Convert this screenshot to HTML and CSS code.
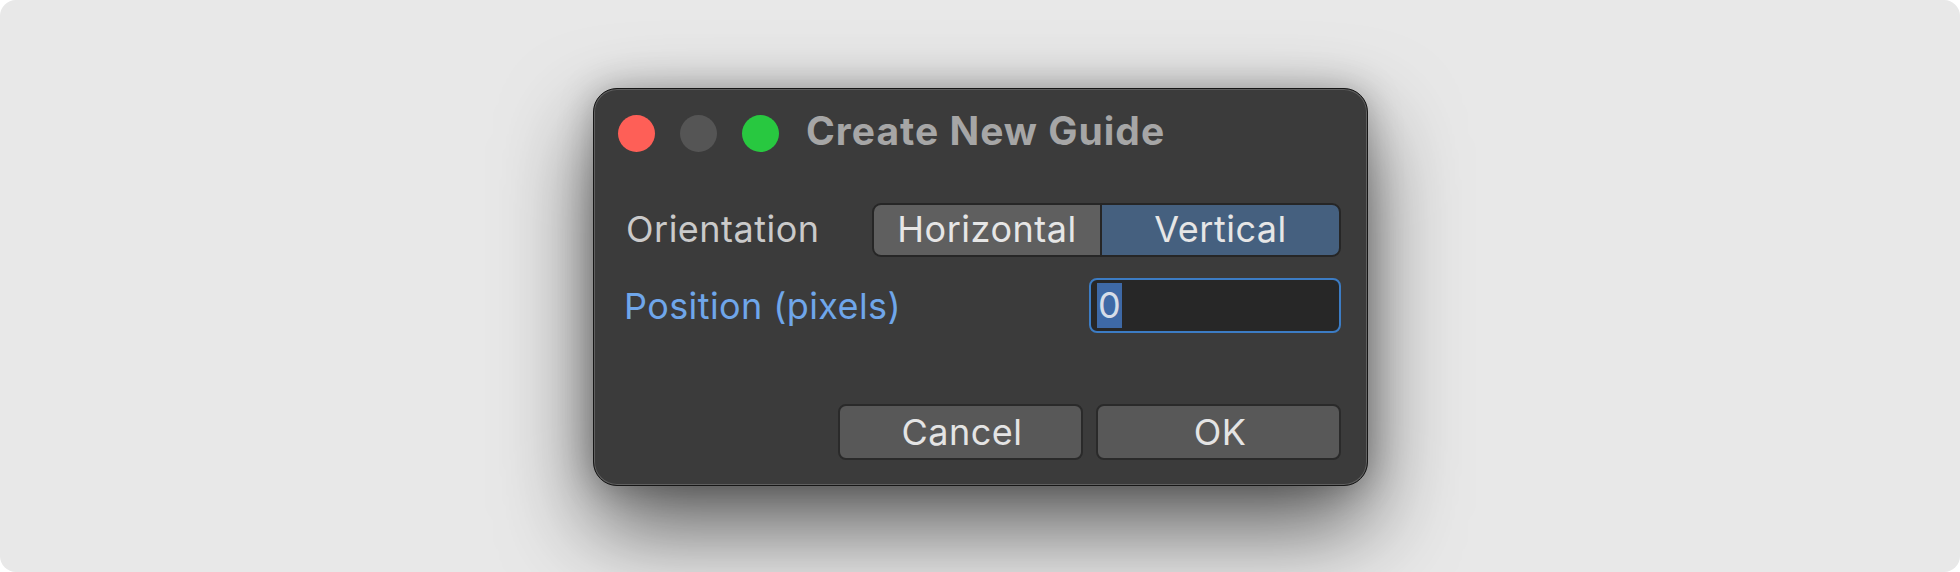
FILE: index.html
```html
<!DOCTYPE html>
<html>
<head>
<meta charset="utf-8">
<link rel="stylesheet" href="styles.css">
</head>
<body>
<div class="stage">
  <div class="window">
    <div class="titlebar">
      <div class="lights">
        <span class="light red"></span>
        <span class="light gray"></span>
        <span class="light green"></span>
      </div>
      <div class="title">Create New Guide</div>
    </div>
    <div class="row row-orient">
      <div class="label">Orientation</div>
      <div class="segmented">
        <div class="seg seg-h">Horizontal</div>
        <div class="seg seg-v">Vertical</div>
      </div>
    </div>
    <div class="row row-pos">
      <div class="label label-blue">Position (pixels)</div>
      <div class="input"><span class="sel">0</span></div>
    </div>
    <div class="buttons">
      <div class="btn">Cancel</div>
      <div class="btn">OK</div>
    </div>
  </div>
</div>
</body>
</html>
```

FILE: styles.css
```css
html, body {
  margin: 0;
  padding: 0;
  background: #ffffff;
}
.stage {
  width: 1960px;
  height: 572px;
  background: #e8e8e8;
  border-radius: 16px;
  display: flex;
  align-items: flex-start;
  padding: 88px 0 0 593px;
  box-sizing: border-box;
  font-family: "Inter", "Noto Sans", sans-serif;
  overflow: hidden;
}
.window {
  width: 775px;
  height: 398px;
  box-sizing: border-box;
  background: #3b3b3b;
  border: 1px solid #161616;
  border-radius: 24px;
  box-shadow: inset 0 0 0 1px #606060, 0 40px 90px rgba(0,0,0,0.62), 0 0 34px rgba(0,0,0,0.25);
  display: flex;
  flex-direction: column;
  padding: 0 26px 0 30px;
}
.titlebar {
  height: 89px;
  display: flex;
  align-items: center;
  margin-left: -6px;
}
.lights {
  display: flex;
  gap: 25px;
}
.light {
  width: 37px;
  height: 37px;
  border-radius: 50%;
  display: block;
}
.red { background: #fe5f57; }
.gray { background: #555555; }
.green { background: #28c840; }
.title {
  margin-left: 27px;
  margin-bottom: 7px;
  font-size: 39px;
  font-weight: 700;
  color: #a6a6a6;
  letter-spacing: 1px;
}
.row {
  display: flex;
  align-items: center;
  justify-content: space-between;
}
.row-orient {
  margin-top: 25px;
  height: 54px;
}
.row-pos {
  margin-top: 21px;
  height: 55px;
}
.label {
  font-size: 36px;
  letter-spacing: 0.5px;
  color: #cacaca;
  padding-left: 2px;
  margin-bottom: 3px;
}
.label-blue {
  color: #6fa6ea;
  padding-left: 0;
  margin-bottom: 0;
  letter-spacing: 0.4px;
}
.segmented {
  display: flex;
  height: 54px;
  box-sizing: border-box;
  border: 2px solid #262626;
  border-radius: 9px;
  overflow: hidden;
  background: #262626;
}
.seg {
  display: flex;
  align-items: center;
  justify-content: center;
  font-size: 36px;
  letter-spacing: 0.5px;
  color: #e6e6e6;
  padding-bottom: 2px;
}
.seg-h {
  width: 226px;
  background: #5f5f5f;
  border-right: 2px solid #262626;
}
.seg-v {
  width: 237px;
  background: #45607f;
}
.input {
  width: 252px;
  height: 55px;
  box-sizing: border-box;
  border: 2px solid #3c7cc4;
  border-radius: 8px;
  background: #272727;
  display: flex;
  align-items: center;
  padding-left: 6px;
}
.sel {
  background: #3e69a6;
  color: #d6dde8;
  font-size: 36px;
  line-height: 45px;
  height: 45px;
  display: block;
  padding: 0 1px;
}
.buttons {
  margin-top: 71px;
  display: flex;
  justify-content: flex-end;
  gap: 13px;
}
.btn {
  width: 245px;
  height: 56px;
  box-sizing: border-box;
  background: #585858;
  border: 2px solid #2a2a2a;
  border-radius: 8px;
  display: flex;
  align-items: center;
  justify-content: center;
  font-size: 36px;
  letter-spacing: 0.5px;
  color: #e4e4e4;
  padding-left: 3px;
}
```
